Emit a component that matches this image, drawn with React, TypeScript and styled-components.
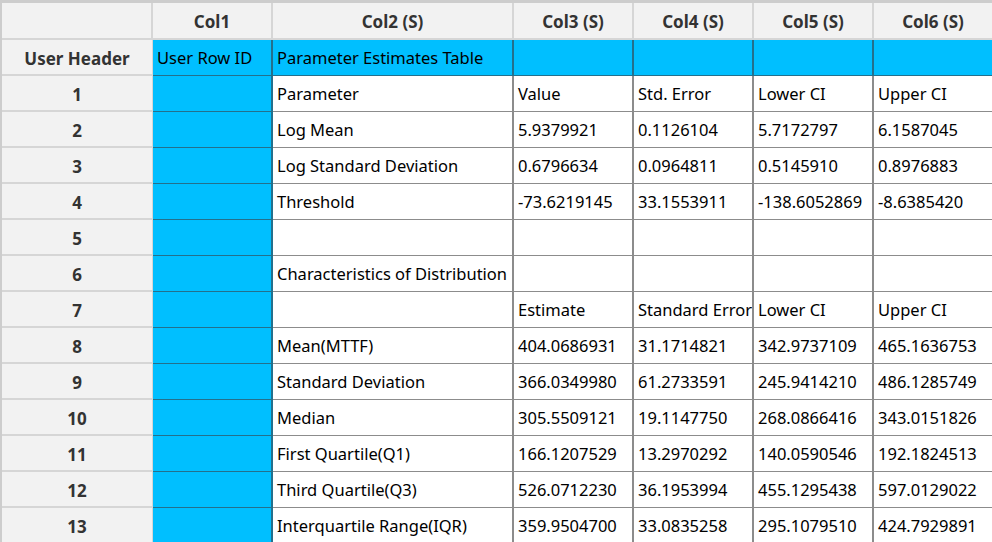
import React from "react";
import styled, { createGlobalStyle, css } from "styled-components";

const GlobalStyle = createGlobalStyle`
  html, body { margin: 0; padding: 0; background: #cdcdcd; overflow: hidden; }
  body { font-family: "Noto Sans", "Open Sans", sans-serif; }
  * { box-sizing: border-box; }
`;

const Frame = styled.div`
  padding: 3px 0 0 2px;
  background: #cdcdcd;
  width: 992px;
  height: 542px;
  overflow: hidden;
`;

const Grid = styled.div`
  display: grid;
  grid-template-columns: 151px 120px 241px 120px 120px 120px 120px;
  grid-auto-rows: 36px;
  grid-template-rows: 37px;
`;

type Kind = "corner" | "colhead" | "rowhead" | "blue" | "white";

const Cell = styled.div<{ $kind: Kind }>`
  display: flex;
  align-items: center;
  min-width: 0;
  overflow: hidden;
  white-space: nowrap;
  font-size: 16.5px;
  line-height: 1;
  padding: 2px 4px 0;
  color: #000;
  ${({ $kind }) => {
    switch ($kind) {
      case "corner":
      case "colhead":
        return css`
          background: #f2f2f2;
          border-right: 2px solid #d6d6d6;
          border-bottom: 2px solid #d6d6d6;
          justify-content: center;
          font-weight: 700;
          font-size: 17px;
          color: #333;
        `;
      case "rowhead":
        return css`
          background: #f2f2f2;
          border-right: 1px solid #d6d6d6;
          border-bottom: 2px solid #d6d6d6;
          justify-content: center;
          font-weight: 700;
          font-size: 17px;
          color: #333;
        `;
      case "blue":
        return css`
          background: #00bfff;
          border-right: 2px solid #24708c;
          border-bottom: 1px solid #24708c;
        `;
      default:
        return css`
          background: #fff;
          border-right: 2px solid #8c8c8c;
          border-bottom: 1px solid #8c8c8c;
        `;
    }
  }}
`;

const headers = ["Col1", "Col2 (S)", "Col3 (S)", "Col4 (S)", "Col5 (S)", "Col6 (S)"];

const rows: string[][] = [
  ["Parameter", "Value", "Std. Error", "Lower CI", "Upper CI"],
  ["Log Mean", "5.9379921", "0.1126104", "5.7172797", "6.1587045"],
  ["Log Standard Deviation", "0.6796634", "0.0964811", "0.5145910", "0.8976883"],
  ["Threshold", "-73.6219145", "33.1553911", "-138.6052869", "-8.6385420"],
  ["", "", "", "", ""],
  ["Characteristics of Distribution", "", "", "", ""],
  ["", "Estimate", "Standard Error", "Lower CI", "Upper CI"],
  ["Mean(MTTF)", "404.0686931", "31.1714821", "342.9737109", "465.1636753"],
  ["Standard Deviation", "366.0349980", "61.2733591", "245.9414210", "486.1285749"],
  ["Median", "305.5509121", "19.1147750", "268.0866416", "343.0151826"],
  ["First Quartile(Q1)", "166.1207529", "13.2970292", "140.0590546", "192.1824513"],
  ["Third Quartile(Q3)", "526.0712230", "36.1953994", "455.1295438", "597.0129022"],
  ["Interquartile Range(IQR)", "359.9504700", "33.0835258", "295.1079510", "424.7929891"],
];

export default function App() {
  return (
    <>
      <GlobalStyle />
      <Frame>
        <Grid>
          <Cell $kind="corner" />
          {headers.map((h) => (
            <Cell key={h} $kind="colhead">{h}</Cell>
          ))}

          <Cell $kind="rowhead">User Header</Cell>
          <Cell $kind="blue">User Row ID</Cell>
          <Cell $kind="blue">Parameter Estimates Table</Cell>
          <Cell $kind="blue" />
          <Cell $kind="blue" />
          <Cell $kind="blue" />
          <Cell $kind="blue" />

          {rows.map((r, i) => (
            <React.Fragment key={i}>
              <Cell $kind="rowhead">{i + 1}</Cell>
              <Cell $kind="blue" />
              {r.map((v, j) => (
                <Cell key={j} $kind="white">{v}</Cell>
              ))}
            </React.Fragment>
          ))}
        </Grid>
      </Frame>
    </>
  );
}
